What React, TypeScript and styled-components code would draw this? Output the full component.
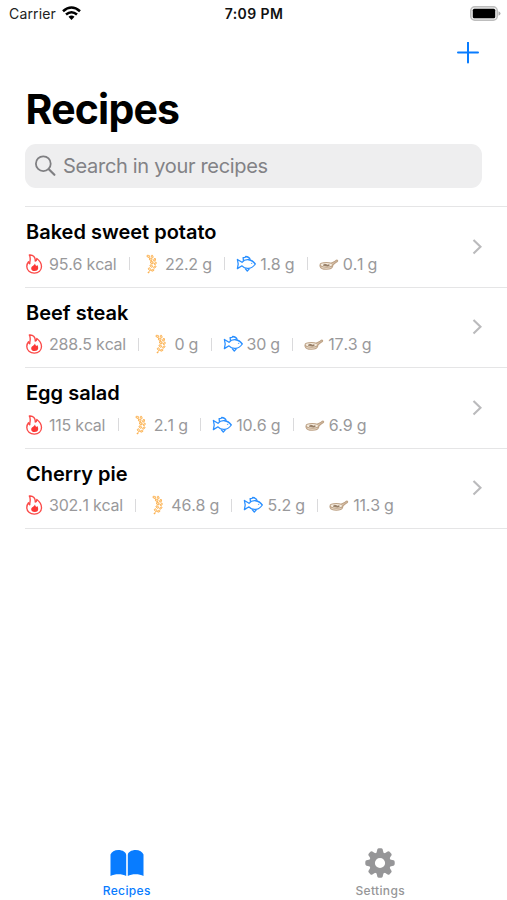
import React from "react";
import styled, { createGlobalStyle } from "styled-components";

const GlobalStyle = createGlobalStyle`
  * { box-sizing: border-box; }
  body { margin: 0; background: #fff; }
`;

const Screen = styled.main`
  display: flex;
  flex-direction: column;
  width: 100%;
  height: 900px;
  overflow: hidden;
  background: #fff;
  color: #000;
  font-family: Inter, "Liberation Sans", sans-serif;
  white-space: nowrap;
`;

const StatusBar = styled.header`
  display: grid;
  grid-template-columns: 1fr auto 1fr;
  align-items: center;
  height: 27px;
  padding: 0 6px 0 9px;
  font-size: 14px;
`;

const Carrier = styled.div`
  display: flex;
  align-items: center;
  gap: 6px;
  color: #222;
  letter-spacing: 0.15px;
`;

const Clock = styled.time`
  margin-left: -2px;
  font-weight: 600;
  font-size: 14px;
  letter-spacing: 0.4px;
  color: #111;
`;

const BatterySlot = styled.div`
  display: flex;
  justify-content: flex-end;
`;

const NavBar = styled.nav`
  display: flex;
  justify-content: flex-end;
  align-items: center;
  height: 51px;
  padding-right: 28px;
`;

const IconButton = styled.button`
  display: flex;
  padding: 0;
  border: 0;
  background: none;
`;

const Title = styled.h1`
  margin: 7px 0 0 25.5px;
  height: 48px;
  line-height: 48px;
  font-size: 41px;
  font-weight: 700;
  letter-spacing: -0.8px;
`;

const SearchField = styled.label`
  display: flex;
  align-items: center;
  gap: 7px;
  height: 44px;
  margin: 11px 25px 18px;
  padding: 0 0 0 10px;
  border-radius: 11px;
  background: #eeeeef;
  color: #828286;
  font-size: 20px;
  letter-spacing: -0.31px;
`;

const List = styled.ul`
  margin: 0 0 0 25px;
  padding: 0;
  list-style: none;
  border-top: 1px solid #e5e5e6;
`;

const Row = styled.li`
  display: flex;
  align-items: center;
  justify-content: space-between;
  height: 80.5px;
  padding-right: 25px;
  border-bottom: 1px solid #e5e5e6;
`;

const RecipeSummary = styled.div`
  padding: 2px 0 0 1px;
`;

const RecipeName = styled.h2`
  margin: 0;
  height: 32px;
  line-height: 32px;
  font-size: 20px;
  font-weight: 600;
  letter-spacing: 0;
`;

const Stats = styled.div`
  display: flex;
  align-items: center;
  height: 31px;
  color: #99999b;
  font-size: 16px;
  letter-spacing: -0.22px;
  font-kerning: none;
`;

const Stat = styled.span`
  display: flex;
  align-items: center;
  gap: 3px;

  & + & {
    gap: 4px;
  }

  & + &::before {
    content: "";
    width: 1px;
    height: 13px;
    margin: 0 7px 0 12.4px;
    background: #dadadc;
  }
`;

const TabBar = styled.footer`
  display: grid;
  grid-template-columns: 1fr 1fr;
  height: 53px;
  margin-top: auto;
`;

const Tab = styled.div<{ $active?: boolean }>`
  display: grid;
  grid-template-rows: 32px 16px;
  place-items: center;
  align-content: start;
  row-gap: 3px;
  color: ${(p) => (p.$active ? "#087cff" : "#969698")};
  font-size: 12px;
  font-weight: 500;
  letter-spacing: 0.35px;
`;

const Wifi = () => (
  <svg width="19" height="15" viewBox="0 0 19 15" fill="none" stroke="#000" strokeWidth="2.6">
    <path d="M1 5.2Q9.500-2.200 18 5.200" />
    <path d="M4 8.600Q9.500 3.900 15 8.600" />
    <path d="M6.500 10.700Q9.500 8.200 12.500 10.700L9.500 14Z" fill="#000" stroke="none" />
  </svg>
);

const Battery = () => (
  <svg width="31" height="15" viewBox="0 0 31 15">
    <rect x="0.750" y="0.750" width="26.500" height="13.500" rx="4" fill="#eee" stroke="#bdbdbd" strokeWidth="1.500" />
    <rect x="2.800" y="2.800" width="22.400" height="9.400" rx="1.500" />
    <path d="M28.500 5.200q2 .8 2 2.300t-2 2.300z" fill="#aaa" />
  </svg>
);

const Plus = () => (
  <svg width="22" height="22" viewBox="0 0 22 22" stroke="#087cff" strokeWidth="2" strokeLinecap="round">
    <path d="M11 .6v20M1 10.600h20" />
  </svg>
);

const Magnifier = () => (
  <svg width="21" height="22" viewBox="0 0 21 22" fill="none" stroke="#7f7f82" strokeWidth="1.800" strokeLinecap="round">
    <circle cx="8.300" cy="8.700" r="7.400" />
    <path d="m13.800 14.300 5.600 5.500" strokeWidth="2.200" />
  </svg>
);

const Flame = () => (
  <svg width="20" height="20" viewBox="0 0 20 20" fill="none" stroke="#fb4a48" strokeWidth="1.350" strokeLinejoin="round">
    <path d="M3.300 1C7.300.6 9.600 3.200 9.200 7c1.100-.3 1.600-1.200 1.600-2.500 2.900 2.100 4.700 4.700 4.700 8.100 0 4-3 6.500-7.200 6.500S.8 16.500.8 12.600c0-1.900.6-3.500 1.700-4.800.2 1.100.6 1.700 1.300 2C3.600 6.900 5.300 4.100 3.300 1Z" />
    <path d="M9 9.500c.2 1.200.6 2 1.400 2.600l.9-1c1.600 2.600 1.200 6-2.500 6-2.800 0-4.100-1.700-3.500-3.700.5-1.500 3-1.900 3.700-3.900Z" fill="#fb3836" stroke="none" />
  </svg>
);

const Wheat = () => (
  <svg width="20" height="20" viewBox="0 0 20 20" fill="#ffe6bf" stroke="#fbb152" strokeWidth=".9">
    <ellipse cx="7.400" cy="2.300" rx="1.500" ry="1" transform="rotate(25 7.400 2.300)" />
    <ellipse cx="9.700" cy="5.300" rx="1.500" ry="1" transform="rotate(32 9.700 5.300)" />
    <ellipse cx="10.800" cy="8.600" rx="1.500" ry="1" transform="rotate(32 10.800 8.600)" />
    <ellipse cx="10.300" cy="12" rx="1.500" ry="1" transform="rotate(40 10.300 12)" />
    <ellipse cx="8.600" cy="15.200" rx="1.500" ry="1" transform="rotate(55 8.600 15.200)" />
    <ellipse cx="11.200" cy="2.500" rx="1.400" ry=".8" transform="rotate(75 11.200 2.500)" />
    <ellipse cx="13.600" cy="5.800" rx="1.400" ry=".8" transform="rotate(-62 13.600 5.800)" />
    <ellipse cx="14.300" cy="9.400" rx="1.400" ry=".8" transform="rotate(-55 14.300 9.400)" />
    <ellipse cx="13.800" cy="13" rx="1.400" ry=".8" transform="rotate(-40 13.800 13)" />
    <ellipse cx="11.700" cy="16.200" rx="1.400" ry=".8" transform="rotate(-20 11.700 16.200)" />
    <path d="m8.500 17.500-1.600 1.500" strokeWidth="1.300" />
  </svg>
);

const Fish = () => (
  <svg width="20" height="20" viewBox="0 0 20 20" fill="none" stroke="#298fff" strokeWidth="1.300" strokeLinejoin="round">
    <path d="M6 8.300C9.300 4.400 15.600 4.800 19.300 10c-3.700 5.400-10 5.700-13.300 1.800L1.400 14.600l.8-4.600-.8-4.500z" />
    <path d="m7.500 6.800-.4-3.200 2.100-.3.400-.8c2.500.1 3.900 1.200 4.700 3.200M9 14.300l2.300 2.700 2.200-2.400" />
    <path d="M15.600 8.900v.8" strokeWidth="1.300" />
  </svg>
);

const Pan = () => (
  <svg width="20" height="20" viewBox="0 0 20 20" fill="none" stroke="#bea387" strokeWidth="1.100">
    <path d="M1.100 11v1.300c1 4 11.700 3.900 12.600-.2V11" fill="#eadccb" />
    <ellipse cx="7.400" cy="10.800" rx="6.300" ry="2.300" fill="#f5ecdf" />
    <path d="M4.300 11.200q1.500-1.500 2.800-.6t3.100.2q.7.900-1.700 1.200z" fill="#a58b72" stroke="#8c725b" strokeWidth=".8" />
    <path d="m12.200 9.200 3.400-1.600 1.700-1.300c1-.6 1.900.4 1 1.200l-1.900 1.300-2.700 2.200" fill="#dcc7af" />
  </svg>
);

const Chevron = () => (
  <svg width="10" height="16" viewBox="0 0 10 16" fill="none" stroke="#bababc" strokeWidth="2.100">
    <path d="m1.500 1 7 6.800-7 6.800" />
  </svg>
);

const Book = () => (
  <svg width="34" height="29" viewBox="0 0 34 29" fill="currentColor">
    <path d="M.5 5.500C1.500 2.800 4.600 1 8.300 1c4.300 0 7.900 2.200 7.900 5v21c-4-2.500-11.700-2.500-15.700.1ZM17.800 6c0-2.800 3.600-5 7.900-5 3.700 0 6.800 1.800 7.800 4.500v21.600c-4-2.600-11.700-2.600-15.700-.1Z" />
  </svg>
);

const Gear = () => (
  <svg width="30" height="30" viewBox="0 0 30 30" fill="currentColor">
    <g>
      {[0, 45, 90, 135, 180, 225, 270, 315].map((a) => (
        <path key={a} transform={`rotate(${a} 15 15)`} d="M11.200 6 12.300 1.500Q12.700.3 13.900.3h2.200q1.200 0 1.600 1.200L18.800 6Z" />
      ))}
    </g>
    <path fillRule="evenodd" d="M15 4.200a10.800 10.800 0 1 0 0 21.600 10.800 10.800 0 0 0 0-21.600Zm0 5.700a5.100 5.100 0 1 1 0 10.200 5.100 5.100 0 0 1 0-10.200Z" />
  </svg>
);

const recipes = [
  { name: "Baked sweet potato", values: ["95.6 kcal", "22.2 g", "1.8 g", "0.1 g"] },
  { name: "Beef steak", values: ["288.5 kcal", "0 g", "30 g", "17.3 g"] },
  { name: "Egg salad", values: ["115 kcal", "2.1 g", "10.6 g", "6.9 g"] },
  { name: "Cherry pie", values: ["302.1 kcal", "46.8 g", "5.2 g", "11.3 g"] },
];

const statIcons = [Flame, Wheat, Fish, Pan];

export default function App() {
  return (
    <>
      <GlobalStyle />
      <Screen>
        <StatusBar>
          <Carrier>Carrier<Wifi /></Carrier>
          <Clock>7:09 PM</Clock>
          <BatterySlot><Battery /></BatterySlot>
        </StatusBar>
        <NavBar>
          <IconButton aria-label="Add recipe"><Plus /></IconButton>
        </NavBar>
        <Title>Recipes</Title>
        <SearchField><Magnifier />Search in your recipes</SearchField>
        <List>
          {recipes.map((recipe) => (
            <Row key={recipe.name}>
              <RecipeSummary>
                <RecipeName>{recipe.name}</RecipeName>
                <Stats>
                  {recipe.values.map((value, i) => {
                    const Icon = statIcons[i];
                    return <Stat key={i}><Icon />{value}</Stat>;
                  })}
                </Stats>
              </RecipeSummary>
              <Chevron />
            </Row>
          ))}
        </List>
        <TabBar>
          <Tab $active><Book />Recipes</Tab>
          <Tab><Gear />Settings</Tab>
        </TabBar>
      </Screen>
    </>
  );
}
